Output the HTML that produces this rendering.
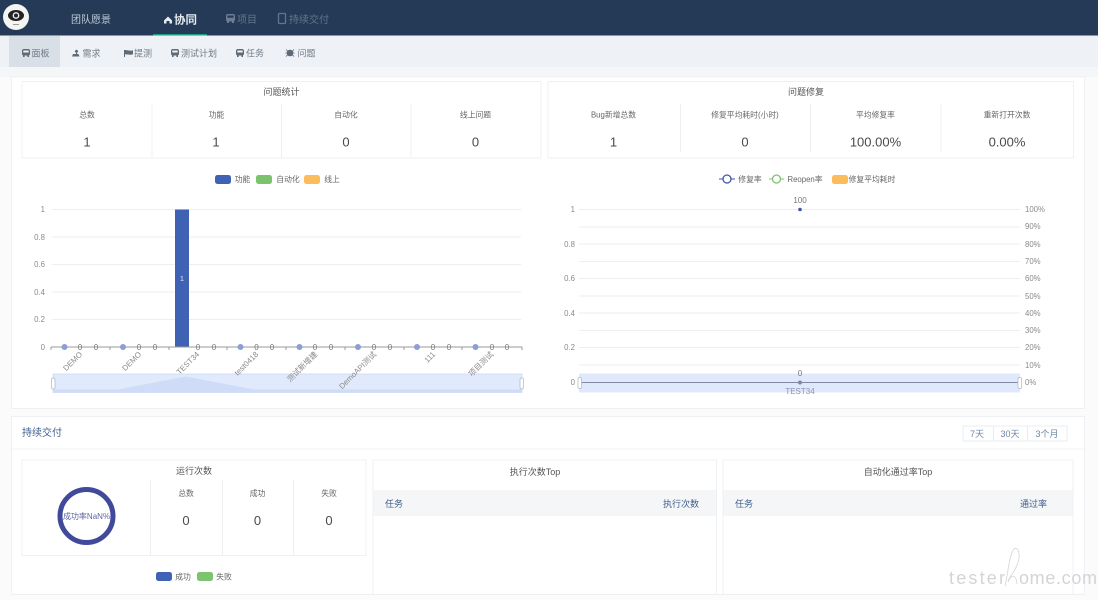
<!DOCTYPE html>
<html><head><meta charset="utf-8"><style>
html,body{margin:0;padding:0;width:1098px;height:600px;overflow:hidden;background:#fff}
svg{display:block}
text{font-family:"Liberation Sans","Noto Sans CJK SC",sans-serif;font-size:7.800px;fill:#666;text-anchor:middle}
.s{text-anchor:start}.e{text-anchor:end}
.n{font-size:13px;fill:#4a4a4a}
.l{fill:#8a8a8a;font-size:7.800px}
.z{fill:#777;font-size:8px}
.h{fill:#3f5f8f;font-size:9px}
.t{fill:#555;font-size:9px}
.sub{font-size:9px;fill:#707a86}
.g{stroke:#eceef1;stroke-width:1}
.b{fill:#fff;stroke:#edf1f4;stroke-width:1}
.d{stroke:#edf0f3;stroke-width:1}
</style></head><body>
<svg width="1098" height="600" viewBox="0 0 1098 600" xmlns="http://www.w3.org/2000/svg">
<defs>
<g id="bus"><rect x="0" y="0" width="8" height="6.500" rx="2"/><rect x="1" y="6" width="1.600" height="2"/><rect x="5.400" y="6" width="1.600" height="2"/><rect x="1.300" y="1.500" width="5.400" height="2" fill="#eef1f5"/></g>
</defs>
<rect width="1098" height="600" fill="#fbfbfc"/>
<!-- header -->
<rect width="1098" height="35.500" fill="#243a57"/>
<circle cx="16" cy="17" r="13" fill="#f4f4f2"/>
<ellipse cx="16" cy="15.500" rx="8" ry="5.500" fill="#222"/>
<circle cx="16" cy="15.500" r="3.400" fill="#f0f0f0"/>
<circle cx="16" cy="15.500" r="2" fill="#222"/>
<rect x="13" y="24" width="6" height="1" fill="#999"/>
<text x="91" y="23" style="font-size:10px;fill:#c2ccd8">团队愿景</text>
<path d="M164 20.500l4-4 4 4v3h-2.500v-2.500h-3v2.500h-2.500z" fill="#e8edf2"/>
<text x="185.500" y="23.500" style="font-size:11.500px;fill:#e6ebf0;font-weight:bold">协同</text>
<rect x="153" y="34" width="54" height="2" fill="#1f9d84"/>
<g fill="#6a7d92" transform="translate(226,14)"><rect x="0" y="0" width="9" height="7.500" rx="2"/><rect x="1" y="7" width="2" height="2"/><rect x="6" y="7" width="2" height="2"/><rect x="1.400" y="1.500" width="6.200" height="2.200" fill="#243a57"/></g>
<text x="247" y="23" style="font-size:10px;fill:#63768b">项目</text>
<rect x="278.500" y="13.500" width="7" height="10" rx="1" fill="none" stroke="#63768b" stroke-width="1.300"/>
<text x="309" y="23" style="font-size:10px;fill:#63768b">持续交付</text>
<!-- sub nav -->
<rect y="35.500" width="1098" height="32" fill="#eef1f5"/>
<rect x="9" y="36" width="51" height="31" fill="#d8dfe7"/>
<rect y="67" width="1098" height="10" fill="#f5f6f8"/>
<g fill="#5f6a76">
<use href="#bus" x="22" y="49"/>
<path d="M72 56.500h7.500l-1-2.500h-1.500v-1.500h.5a1.500 1.500 0 1 0-2 0h.5v1.500h-3z"/>
<path d="M124 50v7h1v-2.800c2.500 0 4 1 8 .2v-4c-3.500.8-5-.4-9-.4z"/>
<use href="#bus" x="171" y="49"/>
<use href="#bus" x="236" y="49"/>
<circle cx="290" cy="53" r="3.300"/><path d="M286 49.500l2 2M294 49.500l-2 2M285.500 53h9M286 56.500l2-2M294 56.500l-2-2" stroke="#5f6a76" stroke-width=".8"/>
</g>
<text x="40.500" y="56.500" class="sub">面板</text>
<text x="91.500" y="56.500" class="sub">需求</text>
<text x="143" y="56.500" class="sub">提测</text>
<text x="199" y="56.500" class="sub">测试计划</text>
<text x="255" y="56.500" class="sub">任务</text>
<text x="306.500" y="56.500" class="sub">问题</text>
<!-- section 1 -->
<rect x="11.500" y="77" width="1073" height="331.500" fill="#fff" stroke="#eef0f3"/>
<rect x="22" y="81.500" width="519" height="76.500" class="b"/>
<rect x="548" y="81.500" width="525.500" height="76.500" class="b"/>
<text x="281.500" y="95" class="t">问题统计</text>
<text x="806" y="95" class="t">问题修复</text>
<g class="d"><line x1="152" y1="104" x2="152" y2="158"/><line x1="281.500" y1="104" x2="281.500" y2="158"/><line x1="411" y1="104" x2="411" y2="158"/>
<line x1="680.500" y1="104" x2="680.500" y2="152"/><line x1="810.500" y1="104" x2="810.500" y2="152"/><line x1="941" y1="104" x2="941" y2="152"/></g>
<text x="87" y="117.500">总数</text><text x="216.500" y="117.500">功能</text><text x="346" y="117.500">自动化</text><text x="475.500" y="117.500">线上问题</text>
<text x="87" y="146.500" class="n">1</text><text x="216" y="146.500" class="n">1</text><text x="346" y="146.500" class="n">0</text><text x="475.500" y="146.500" class="n">0</text>
<text x="613.500" y="117.500">Bug新增总数</text><text x="745" y="117.500">修复平均耗时(小时)</text><text x="875.500" y="117.500">平均修复率</text><text x="1007" y="117.500">重新打开次数</text>
<text x="613.500" y="146.500" class="n">1</text><text x="745" y="146.500" class="n">0</text><text x="875.500" y="146.500" class="n">100.00%</text><text x="1007" y="146.500" class="n">0.00%</text>
<!-- legends -->
<rect x="215" y="175" width="16" height="9" rx="2.500" fill="#3f62b5"/><text x="242.500" y="182">功能</text>
<rect x="256" y="175" width="16" height="9" rx="2.500" fill="#7cc36e"/><text x="288" y="182">自动化</text>
<rect x="304" y="175" width="16" height="9" rx="2.500" fill="#fbbc5b"/><text x="332" y="182">线上</text>
<line x1="719" y1="179" x2="735" y2="179" stroke="#3f55a8"/><circle cx="727" cy="179" r="4" fill="#fff" stroke="#3f55a8" stroke-width="1.300"/><text x="750" y="182">修复率</text>
<line x1="769" y1="179" x2="784" y2="179" stroke="#7cc36e"/><circle cx="776.500" cy="179" r="4" fill="#fff" stroke="#7cc36e" stroke-width="1.300"/><text x="805" y="182">Reopen率</text>
<rect x="832" y="175" width="16" height="9" rx="2.500" fill="#fbbc5b"/><text x="872" y="182">修复平均耗时</text>
<!-- left chart -->
<g class="g"><line x1="52" y1="209.500" x2="521" y2="209.500"/><line x1="52" y1="237" x2="521" y2="237"/><line x1="52" y1="264.500" x2="521" y2="264.500"/><line x1="52" y1="292" x2="521" y2="292"/><line x1="52" y1="319.500" x2="521" y2="319.500"/></g>
<g><text x="45" y="212" class="e l">1</text><text x="45" y="240" class="e l">0.8</text><text x="45" y="267" class="e l">0.6</text><text x="45" y="295" class="e l">0.4</text><text x="45" y="322" class="e l">0.2</text><text x="45" y="350" class="e l">0</text></g>
<rect x="175" y="209.500" width="14" height="137.500" fill="#3f62b5"/>
<text x="182" y="281" style="fill:#dfe6f5;font-size:7.500px">1</text>
<line x1="51" y1="347" x2="522" y2="347" stroke="#999"/>
<path d="M51 347v3M110 347v3M169 347v3M227 347v3M286 347v3M345 347v3M404 347v3M462 347v3M522 347v3" stroke="#999"/>
<g fill="#8b9fd6"><circle cx="64.500" cy="347" r="3"/><circle cx="123" cy="347" r="3"/><circle cx="240.500" cy="347" r="3"/><circle cx="299.500" cy="347" r="3"/><circle cx="358" cy="347" r="3"/><circle cx="417" cy="347" r="3"/><circle cx="475.500" cy="347" r="3"/></g>
<g>
<text x="80" y="350" class="z">0</text><text x="96" y="350" class="z">0</text>
<text x="139" y="350" class="z">0</text><text x="155" y="350" class="z">0</text>
<text x="198" y="350" class="z">0</text><text x="214" y="350" class="z">0</text>
<text x="256.500" y="350" class="z">0</text><text x="272" y="350" class="z">0</text>
<text x="315" y="350" class="z">0</text><text x="331" y="350" class="z">0</text>
<text x="374" y="350" class="z">0</text><text x="390" y="350" class="z">0</text>
<text x="433" y="350" class="z">0</text><text x="449" y="350" class="z">0</text>
<text x="492" y="350" class="z">0</text><text x="507" y="350" class="z">0</text>
</g>
<rect x="53" y="374" width="469" height="18.500" fill="#e0eafc" stroke="#c5d6f2" stroke-width=".7"/>
<path d="M53 392.500v-3h65l68-13 68 13h268v3z" fill="#cfdcf7"/>
<g>
<text class="e l" transform="translate(80,352) rotate(-45)" x="0" y="4">DEMO</text>
<text class="e l" transform="translate(139,352) rotate(-45)" x="0" y="4">DEMO</text>
<text class="e l" transform="translate(197,352) rotate(-45)" x="0" y="4">TEST34</text>
<text class="e l" transform="translate(256,352) rotate(-45)" x="0" y="4">test0418</text>
<text class="e l" transform="translate(315,352) rotate(-45)" x="0" y="4">测试新增建</text>
<text class="e l" transform="translate(374,352) rotate(-45)" x="0" y="4">DemoAPI测试</text>
<text class="e l" transform="translate(433,352) rotate(-45)" x="0" y="4">111</text>
<text class="e l" transform="translate(491,352) rotate(-45)" x="0" y="4">项目测试</text>
</g>
<rect x="51.500" y="378" width="3.500" height="11" rx="1.500" fill="#fff" stroke="#a9b6c8" stroke-width=".7"/>
<rect x="520" y="378" width="3.500" height="11" rx="1.500" fill="#fff" stroke="#a9b6c8" stroke-width=".7"/>
<!-- right chart -->
<g class="g"><line x1="579" y1="209.500" x2="1020" y2="209.500"/><line x1="579" y1="227" x2="1020" y2="227"/><line x1="579" y1="244" x2="1020" y2="244"/><line x1="579" y1="261.500" x2="1020" y2="261.500"/><line x1="579" y1="278.500" x2="1020" y2="278.500"/><line x1="579" y1="296" x2="1020" y2="296"/><line x1="579" y1="313" x2="1020" y2="313"/><line x1="579" y1="330.500" x2="1020" y2="330.500"/><line x1="579" y1="347.500" x2="1020" y2="347.500"/><line x1="579" y1="365" x2="1020" y2="365"/></g>
<g><text x="575" y="212" class="e l">1</text><text x="575" y="247" class="e l">0.8</text><text x="575" y="281" class="e l">0.6</text><text x="575" y="316" class="e l">0.4</text><text x="575" y="350" class="e l">0.2</text><text x="575" y="385" class="e l">0</text></g>
<g><text x="1025" y="212" class="s l">100%</text><text x="1025" y="229" class="s l">90%</text><text x="1025" y="247" class="s l">80%</text><text x="1025" y="264" class="s l">70%</text><text x="1025" y="281" class="s l">60%</text><text x="1025" y="299" class="s l">50%</text><text x="1025" y="316" class="s l">40%</text><text x="1025" y="333" class="s l">30%</text><text x="1025" y="350" class="s l">20%</text><text x="1025" y="368" class="s l">10%</text><text x="1025" y="385" class="s l">0%</text></g>
<text x="800" y="203" class="z">100</text>
<circle cx="800" cy="209.500" r="1.800" fill="#3f55a8"/>
<rect x="579" y="373.500" width="441" height="19" fill="#e0e8fb"/>
<line x1="580" y1="382.500" x2="1020" y2="382.500" stroke="#7f8aa0"/>
<text x="800" y="376" class="z">0</text>
<circle cx="800" cy="382.500" r="2" fill="#7f8aa0"/>
<text x="800" y="394" style="fill:#8c94b5;font-size:8px">TEST34</text>
<rect x="578" y="377.500" width="3.500" height="11" rx="1.500" fill="#fff" stroke="#a9b6c8" stroke-width=".7"/>
<rect x="1018" y="377.500" width="3.500" height="11" rx="1.500" fill="#fff" stroke="#a9b6c8" stroke-width=".7"/>
<!-- section 2 -->
<rect x="11.500" y="416.500" width="1073" height="178" fill="#fff" stroke="#eef0f3"/>
<line x1="12" y1="449" x2="1084" y2="449" stroke="#f1f3f5"/>
<text x="22" y="436" class="s" style="font-size:10px;fill:#3f5f8f">持续交付</text>
<rect x="963" y="426" width="104" height="15" fill="#fff" stroke="#e8ecf0"/>
<line x1="993.500" y1="426" x2="993.500" y2="441" stroke="#e8ecf0"/><line x1="1027.500" y1="426" x2="1027.500" y2="441" stroke="#e8ecf0"/>
<text x="977" y="437" style="font-size:9px;fill:#6f87a6">7天</text><text x="1010" y="437" style="font-size:9px;fill:#6f87a6">30天</text><text x="1047" y="437" style="font-size:9px;fill:#6f87a6">3个月</text>
<!-- run count -->
<rect x="22" y="460" width="344" height="95.500" class="b"/>
<text x="194" y="474" class="t">运行次数</text>
<g class="d"><line x1="150.500" y1="480" x2="150.500" y2="556"/><line x1="222.500" y1="480" x2="222.500" y2="556"/><line x1="293.500" y1="480" x2="293.500" y2="556"/></g>
<text x="186" y="496">总数</text><text x="257.500" y="496">成功</text><text x="329" y="496">失败</text>
<text x="186" y="525" class="n">0</text><text x="257.500" y="525" class="n">0</text><text x="329" y="525" class="n">0</text>
<circle cx="86.500" cy="516" r="26.500" fill="none" stroke="#414a9a" stroke-width="5"/>
<text x="86.500" y="519" style="font-size:8px;fill:#5f67a8">成功率NaN%</text>
<rect x="156" y="572" width="16" height="9" rx="2.500" fill="#3f62b5"/><text x="183" y="579.500">成功</text>
<rect x="197" y="572" width="16" height="9" rx="2.500" fill="#7cc36e"/><text x="224" y="579.500">失败</text>
<!-- tables -->
<rect x="373" y="460" width="343.500" height="134.500" class="b"/>
<rect x="373.500" y="490" width="342.500" height="26" fill="#f5f6f7"/>
<text x="535" y="475" class="t">执行次数Top</text>
<text x="385" y="507" class="s h">任务</text><text x="699" y="507" class="e h">执行次数</text>
<rect x="723" y="460" width="350" height="134.500" class="b"/>
<rect x="723.500" y="490" width="349" height="26" fill="#f5f6f7"/>
<text x="898" y="475" class="t">自动化通过率Top</text>
<text x="735" y="507" class="s h">任务</text><text x="1047" y="507" class="e h">通过率</text>
<!-- watermark -->
<text x="949" y="584" class="s" textLength="56" lengthAdjust="spacing" style="font-size:18px;fill:#d2d4d7">tester</text>
<path d="M1005 586c3-12 4-31 9-37 5-3 7 7 3 16-2 6-6 10-9 16M1008 582c3-7 8-9 9 2" fill="none" stroke="#d2d4d7" stroke-width=".8"/>
<text x="1019" y="584" class="s" textLength="78" lengthAdjust="spacing" style="font-size:18px;fill:#d2d4d7">ome.com</text>
</svg>
</body></html>
